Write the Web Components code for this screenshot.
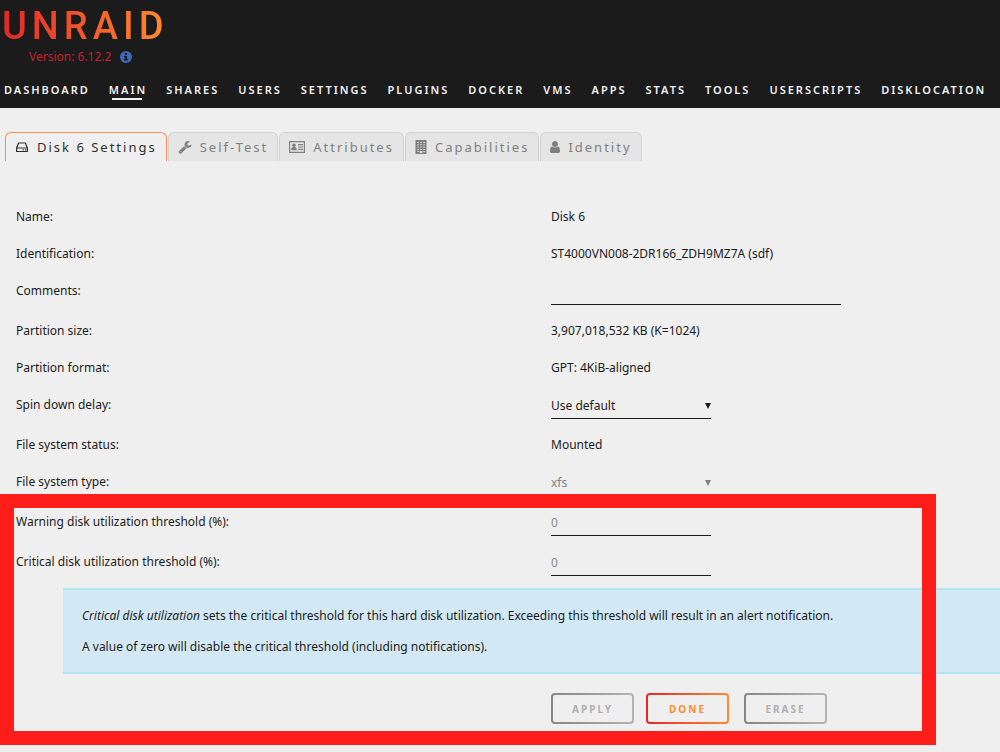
<!DOCTYPE html>
<html lang="en">
<head>
<meta charset="utf-8">
<title>Unraid - Disk 6 Settings</title>
<style>
  body { margin: 0; background: #efefef; color: #1c1b1b; font: 12px/24px "Noto Sans", "Open Sans", sans-serif; }
</style>
</head>
<body>
<site-header version="6.12.2">
  <nav-link>Dashboard</nav-link>
  <nav-link active>Main</nav-link>
  <nav-link>Shares</nav-link>
  <nav-link>Users</nav-link>
  <nav-link>Settings</nav-link>
  <nav-link>Plugins</nav-link>
  <nav-link>Docker</nav-link>
  <nav-link>VMs</nav-link>
  <nav-link>Apps</nav-link>
  <nav-link>Stats</nav-link>
  <nav-link>Tools</nav-link>
  <nav-link>Userscripts</nav-link>
  <nav-link>Disklocation</nav-link>
</site-header>
<tab-bar>
  <tab-item icon="disk" active>Disk 6 Settings</tab-item>
  <tab-item icon="wrench">Self-Test</tab-item>
  <tab-item icon="card">Attributes</tab-item>
  <tab-item icon="building">Capabilities</tab-item>
  <tab-item icon="user">Identity</tab-item>
</tab-bar>
<settings-form>
  <setting-row label="Name:" value="Disk 6"></setting-row>
  <setting-row label="Identification:" value="ST4000VN008-2DR166_ZDH9MZ7A (sdf)"></setting-row>
  <setting-row label="Comments:" kind="input" wide></setting-row>
  <setting-row label="Partition size:" value="3,907,018,532 KB (K=1024)"></setting-row>
  <setting-row label="Partition format:" value="GPT: 4KiB-aligned"></setting-row>
  <setting-row label="Spin down delay:" kind="select" value="Use default"></setting-row>
  <setting-row label="File system status:" value="Mounted"></setting-row>
  <setting-row label="File system type:" kind="select" value="xfs" disabled></setting-row>
  <marked-area>
    <setting-row label="Warning disk utilization threshold (%):" kind="input" placeholder="0"></setting-row>
    <setting-row label="Critical disk utilization threshold (%):" kind="input" placeholder="0"></setting-row>
    <help-note slot="after">
      <p><em>Critical disk utilization</em> sets the critical threshold for this hard disk utilization. Exceeding this threshold will result in an alert notification.</p>
      <p>A value of zero will disable the critical threshold (including notifications).</p>
    </help-note>
    <form-actions slot="after"></form-actions>
  </marked-area>
</settings-form>

<script>
const define = (name, Base) => customElements.define(name, Base);

class Element extends HTMLElement {
  constructor() {
    super();
    this.attachShadow({ mode: 'open' });
  }
  connectedCallback() {
    this.shadowRoot.innerHTML = this.template();
  }
}

define('site-header', class extends Element {
  template() {
    return `<style>
      :host { display: block; background: #1b1b1b; height: 108px; }
      .brand { padding: 4px 0 0 2px; }
      .logo { display: block; width: max-content; font: 500 38px/44px Roboto, sans-serif; letter-spacing: 5px;
        text-decoration: none; color: transparent; background: linear-gradient(90deg, #e22828, #ff8c2f);
        -webkit-background-clip: text; background-clip: text; }
      .version { display: flex; align-items: center; gap: 9px; padding-left: 27px; color: #c9202a; line-height: 18px; }
      svg { width: 12px; height: 12px; }
      nav { display: flex; gap: 21px; padding: 14px 0 0 4px; }
    </style>
    <div class="brand">
      <a class="logo" href="#">UNRAID</a>
      <div class="version"><span>Version: ${this.getAttribute('version')}</span>
        <svg viewBox="0 0 12 12"><circle cx="6" cy="6" r="6" fill="#4068b8"/><path d="M5 2h2v2H5zM4 5h3v3h1v1.500H4V8h1V6.500H4z" fill="#1b1b1b"/></svg>
      </div>
    </div>
    <nav><slot></slot></nav>`;
  }
});

define('nav-link', class extends Element {
  template() {
    return `<style>
      :host { display: block; }
      a { display: block; color: #f2f2f2; text-decoration: none; text-transform: uppercase; white-space: nowrap;
        font-size: 11px; font-weight: 600; line-height: 20px; letter-spacing: 2px; margin-right: -2px; }
      :host([active]) a::after { content: ""; display: block; height: 2px; margin: -2px 5px 0 3px; background: #f2f2f2; }
    </style><a href="#"><slot></slot></a>`;
  }
});

const icons = {
  disk: '<svg viewBox="0 0 14 14"><path d="M1.600 8 3.600 3h6.800L12.400 8v3.500H1.600zM1.600 8h10.800" fill="none" stroke="currentColor" stroke-width="1.200" stroke-linejoin="round"/><path d="M7.600 9.300h1.200v1.100H7.600zM10 9.300h1.200v1.100H10z" fill="currentColor"/></svg>',
  wrench: '<svg viewBox="0 0 1792 1792"><path fill="currentColor" d="M448 1472q0-26-19-45t-45-19-45 19-19 45 19 45 45 19 45-19 19-45zm644-420l-682 682q-37 37-90 37-52 0-91-37l-106-108q-38-36-38-90 0-53 38-91l681-681q39 98 114.500 173.500t173.500 114.500zm634-435q0 39-23 106-47 134-164.500 217.500t-258.500 83.500q-185 0-316.500-131.500t-131.500-316.500 131.500-316.500 316.500-131.500q58 0 121.500 16.500t107.500 46.500q16 11 16 28t-16 28l-293 169v224l193 107q5-3 79-48.500t135.500-81 70.500-35.500q15 0 23.500 10t8.500 25z"/></svg>',
  card: '<svg viewBox="0 0 16 14" style="width:16px"><path d="M.6 1.600h14.800v10.800H.6z" fill="none" stroke="currentColor" stroke-width="1.200"/><circle cx="5" cy="5.200" r="1.800" fill="currentColor"/><path d="M2.200 10.200c0-2 .8-3.400 2.800-3.400s2.800 1.400 2.800 3.400zM9 4h5v1.200H9zM9 6.400h5v1.200H9zM9 8.800h5V10H9z" fill="currentColor"/></svg>',
  building: '<svg viewBox="0 0 12 14" style="width:12px"><path fill="currentColor" fill-rule="evenodd" d="M.5 0h11v14h-11zM2.300 2v1h1.500V2zm3 0v1h1.500V2zm3 0v1h1.500V2zm-6 2.300v1h1.500v-1zm3 0v1h1.500v-1zm3 0v1h1.500v-1zm-6 2.300v1h1.500v-1zm3 0v1h1.500v-1zm3 0v1h1.500v-1zm-6 2.300v1h1.500v-1zm3 0v1h1.500v-1zm3 0v1h1.500v-1zM4.800 11v2h2.500v-2zm-2.500 0v1h1.500v-1zm6 0v1h1.500v-1z"/></svg>',
  user: '<svg viewBox="0 0 1280 1536" style="width:10px;height:12px"><path fill="currentColor" d="M1280 1271q0 109-62.500 187t-150.500 78h-854q-88 0-150.500-78t-62.500-187q0-85 8.500-160.500t31.500-152 58.500-131 94-89 134.500-34.500q131 128 313 128t313-128q76 0 134.500 34.500t94 89 58.500 131 31.500 152 8.500 160.500zm-256-887q0 159-112.500 271.500t-271.500 112.500-271.500-112.500-112.500-271.500 112.500-271.500 271.500-112.500 271.500 112.500 112.500 271.500z"/></svg>'
};

define('tab-bar', class extends Element {
  template() {
    return `<style>
      :host { display: flex; gap: 1px; padding: 24px 0 0 5px; }
    </style><slot></slot>`;
  }
});

define('tab-item', class extends Element {
  template() {
    return `<style>
      :host { display: block; }
      button { display: flex; align-items: center; gap: 8px; height: 29px; padding: 0 9px; margin: 0;
        border: 1px solid #d2d2d2; border-bottom: 0; border-radius: 6px 6px 0 0; background: #e5e5e5; color: #808080;
        font: inherit; font-size: 13px; letter-spacing: 2px; white-space: nowrap; cursor: pointer; }
      :host([active]) button { background: #efefef; border-color: #ff8c4f; color: #303030; }
      svg { display: block; width: 14px; height: 14px; }
    </style><button type="button">${icons[this.getAttribute('icon')]}<span><slot></slot></span></button>`;
  }
});

define('settings-form', class extends Element {
  template() {
    return `<style>
      :host { display: flex; flex-direction: column; gap: 13px; padding: 44px 0 28px; }
    </style><slot></slot>`;
  }
});

define('setting-row', class extends Element {
  control() {
    const value = this.getAttribute('value') || '';
    const kind = this.getAttribute('kind');
    if (kind === 'input') return `<input id="field" type="text" value="${value}" placeholder="${this.getAttribute('placeholder') || ''}">`;
    if (kind === 'select') return `<div class="pick"><select id="field" ${this.hasAttribute('disabled') ? 'disabled' : ''}><option>${value}</option></select>
      <svg viewBox="0 0 6 6"><path d="M0 0h6L3 6z" fill="currentColor"/></svg></div>`;
    return `<output id="field">${value}</output>`;
  }
  template() {
    return `<style>
      :host { display: grid; grid-template-columns: calc(55% + 1px) 1fr; align-items: start; }
      :host([kind]) { min-height: 27px; }
      label { padding-left: 16px; }
      input, select { box-sizing: border-box; display: block; width: 160px; height: 26px; margin: 0; padding: 0;
        border: 0; border-bottom: 1px solid #1c1b1b; border-radius: 0; outline: 0; background: transparent;
        color: inherit; font: inherit; appearance: none; }
      input::placeholder { color: #8c8c8c; opacity: 1; }
      :host([wide]) input { width: 290px; }
      .pick { display: grid; width: 160px; align-items: center; }
      .pick > * { grid-area: 1 / 1; }
      .pick svg { width: 6px; height: 6px; justify-self: end; pointer-events: none; }
      :host([disabled]) .pick { color: #808080; }
      select:disabled { opacity: 1; border-color: transparent; }
    </style><label for="field">${this.getAttribute('label')}</label>${this.control()}`;
  }
});

define('marked-area', class extends Element {
  template() {
    return `<style>
      :host { display: block; position: relative; }
      .rows { display: flex; flex-direction: column; gap: 13px; }
      .frame { position: absolute; inset: -16px 64px -21px 0; border: 14px solid #ff1d19; pointer-events: none; }
    </style><div class="rows"><slot></slot></div><slot name="after"></slot><div class="frame"></div>`;
  }
});

define('help-note', class extends Element {
  template() {
    return `<style>
      :host { display: block; margin: 11px 0 0 63px; padding: 14px 0 13px 19px; background: #d2e9f5;
        border: solid #aee5ee; border-width: 2px 0; }
      ::slotted(p) { margin: 0 0 7px; }
      ::slotted(p:last-child) { margin: 0; }
    </style><slot></slot>`;
  }
});

define('form-actions', class extends Element {
  template() {
    return `<style>
      :host { display: flex; gap: 12px; padding: 19px 0 0 calc(55% + 1px); }
      button { width: 83px; height: 31px; padding: 0; border: 2px solid transparent; border-radius: 4px; color: #b0b0b0;
        background: linear-gradient(#efefef, #efefef) padding-box, linear-gradient(90deg, #868686, #b4b4b4) border-box;
        font: inherit; font-size: 10px; font-weight: 700; line-height: 20px; letter-spacing: 2px; text-transform: uppercase; }
      .done { color: #ff8c2f; background: linear-gradient(#efefef, #efefef) padding-box, linear-gradient(90deg, #e22828, #ff8c2f) border-box; }
      .erase { margin-left: 3px; }
    </style>
    <button type="submit" disabled>Apply</button><button type="button" class="done">Done</button><button type="button" class="erase" disabled>Erase</button>`;
  }
});
</script>
</body>
</html>
